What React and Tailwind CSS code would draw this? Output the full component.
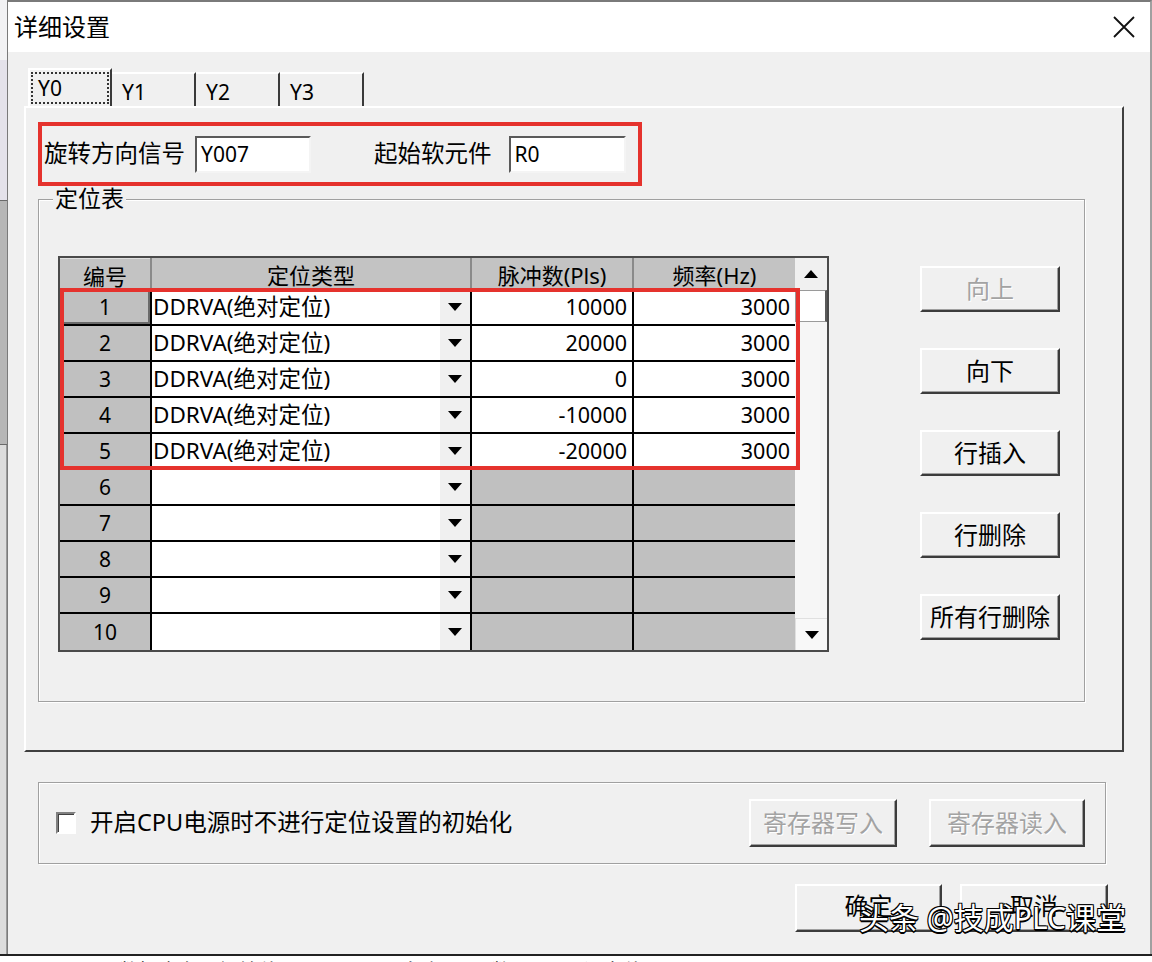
import React from 'react';

const rows = [
  { n: 1, type: 'DDRVA(绝对定位)', p: '10000', f: '3000' },
  { n: 2, type: 'DDRVA(绝对定位)', p: '20000', f: '3000' },
  { n: 3, type: 'DDRVA(绝对定位)', p: '0', f: '3000' },
  { n: 4, type: 'DDRVA(绝对定位)', p: '-10000', f: '3000' },
  { n: 5, type: 'DDRVA(绝对定位)', p: '-20000', f: '3000' },
  { n: 6 },
  { n: 7 },
  { n: 8 },
  { n: 9 },
  { n: 10 },
];

const Tri = ({ up }) => (
  <svg width="14" height="8" viewBox="0 0 14 8">
    <path d={up ? 'M7 0L14 8H0z' : 'M0 0H14L7 8z'} fill="#000" />
  </svg>
);

const Btn = ({ children, disabled, className = '' }) => (
  <div
    className={`flex items-center justify-center bg-[#f0f0f0] border-2 border-t-white border-l-white border-r-[#3c3c3c] border-b-[#3c3c3c] shadow-[inset_-1px_-1px_0_#a0a0a0] text-[24px] leading-none ${
      disabled ? 'text-[#a3a3a3] [text-shadow:1px_1px_0_#ffffff]' : 'text-black'
    } ${className}`}
  >
    {children}
  </div>
);

const Input = ({ value, className = '' }) => (
  <div
    className={`h-[37px] bg-white border-2 border-t-[#5a5a5a] border-l-[#5a5a5a] border-r-[#f4f4f4] border-b-[#f4f4f4] flex items-center pl-[4px] text-[21px] leading-none ${className}`}
  >
    {value}
  </div>
);

const Row = ({ r, last }) => {
  const filled = !!r.p;
  return (
    <div className={`flex h-[36px] ${last ? '' : 'border-b-2 border-black'}`}>
      <div
        className={`w-[90px] bg-[#c0c0c0] flex items-center justify-center text-[21px] leading-none ${
          r.n === 1 ? 'border-2 border-t-[#e6e6e6] border-l-[#e6e6e6] border-r-[#6a6a6a] border-b-[#6a6a6a]' : ''
        }`}
      >
        {r.n}
      </div>
      <div className="w-[320px] border-l-2 border-black bg-white flex">
        <div className="flex-1 flex items-center pl-[1px] text-[22.5px] leading-none whitespace-nowrap">
          {r.type || ''}
        </div>
        <div className="w-[30px] bg-[#f0f0f0] flex items-center justify-center">
          <Tri />
        </div>
      </div>
      <div
        className={`w-[162px] border-l-2 border-black flex items-center justify-end pr-[5px] text-[21.5px] leading-none ${
          filled ? 'bg-white' : 'bg-[#c0c0c0]'
        }`}
      >
        {r.p || ''}
      </div>
      <div
        className={`flex-1 border-l-2 border-black flex items-center justify-end pr-[5px] text-[21.5px] leading-none ${
          filled ? 'bg-white' : 'bg-[#c0c0c0]'
        }`}
      >
        {r.f || ''}
      </div>
    </div>
  );
};

const PosTable = () => (
  <div className="relative w-[771px] border-2 border-[#4a4a4a] flex">
    <div className="w-[735px] flex flex-col">
      <div className="flex h-[32px] border-b-2 border-black bg-[#c3c3c3] text-[22px] leading-none">
        <div className="w-[90px] flex items-center justify-center pt-[4px] border-t border-t-[#e0e0e0]">编号</div>
        <div className="w-[320px] border-l-2 border-[#8a8a8a] flex items-center justify-center pt-[4px]">定位类型</div>
        <div className="w-[162px] border-l-2 border-[#8a8a8a] flex items-center justify-center pt-[4px]">脉冲数(Pls)</div>
        <div className="flex-1 border-l-2 border-[#8a8a8a] flex items-center justify-center pt-[4px]">频率(Hz)</div>
      </div>
      {rows.map((r, i) => (
        <Row key={r.n} r={r} last={i === rows.length - 1} />
      ))}
    </div>
    <div className="w-[32px] flex flex-col bg-[#f6f6f6]">
      <div className="h-[32px] bg-[#f0f0f0] flex items-center justify-center">
        <Tri up />
      </div>
      <div className="h-[32px] bg-white border border-[#9a9a9a] border-r-2 border-r-[#5a5a5a]" />
      <div className="flex-1" />
      <div className="h-[32px] bg-[#f8f8f8] border-t border-l border-[#e0e0e0] flex items-center justify-center">
        <Tri />
      </div>
    </div>
    <div className="absolute left-[0px] top-[30px] w-[740px] h-[182px] border-4 border-[#e5322d] pointer-events-none" />
  </div>
);

const LeftStrip = () => (
  <div className="w-[7px] flex flex-col overflow-hidden">
    <div className="h-[60px] bg-[#f2f2f4]" />
    <div className="h-[140px] bg-[#e4e2ea]" />
    <div className="h-[245px] bg-[#b6b6b6] border-y border-[#6a6a6a]" />
    <div className="flex-1 bg-[#dcdcdc] border-r border-[#9a9a9a]" />
  </div>
);

export default function App() {
  return (
    <div className="w-[1152px] h-[962px] overflow-hidden bg-white text-black font-['Noto_Sans','Noto_Sans_CJK_SC',sans-serif] flex flex-col">
      <div className="flex h-[954px]">
        <LeftStrip />
        <div className="flex-1 flex flex-col border-l border-t-2 border-r-2 border-[#7a7a7a] border-r-[#a0a0a0]">
          {/* title bar */}
          <div className="h-[50px] bg-white flex items-center justify-between pl-[6px] pr-[14px]">
            <span className="text-[24px] leading-none">详细设置</span>
            <svg width="24" height="24" viewBox="0 0 24 24">
              <path d="M2 2L22 22M22 2L2 22" stroke="#111" strokeWidth="1.8" />
            </svg>
          </div>

          {/* body */}
          <div className="flex-1 bg-[#f0f0f0] flex flex-col pt-[16px]">
            {/* tabs */}
            <div className="flex items-end h-[38px] pl-[20px] text-[21px] leading-none">
              <div className="w-[84px] h-[38px] border-t-2 border-l-2 border-t-white border-l-white border-r-2 border-r-[#3a3a3a]">
                <div className="mx-[1px] mt-[2px] h-[32px] border-2 border-dotted border-[#333] flex items-center pl-[5px]">
                  Y0
                </div>
              </div>
              {['Y1', 'Y2', 'Y3'].map((t) => (
                <div
                  key={t}
                  className="w-[84px] h-[34px] border-t-2 border-t-white border-r-2 border-r-[#3a3a3a] flex items-center pl-[10px] pt-[4px]"
                >
                  {t}
                </div>
              ))}
            </div>

            {/* tab panel */}
            <div className="ml-[16px] w-[1100px] h-[646px] border-2 border-t-white border-l-white border-r-[#404040] border-b-[#404040] flex flex-col">
              <div className="ml-[12px] mt-[14px] w-[604px] h-[64px] border-4 border-[#e5322d] flex items-center pl-[2px] text-[23.5px] leading-none">
                <span>旋转方向信号</span>
                <Input value="Y007" className="ml-[10px] w-[116px]" />
                <span className="ml-[63px]">起始软元件</span>
                <Input value="R0" className="ml-[17px] w-[117px]" />
              </div>

              <div className="relative ml-[12px] mt-[13px] w-[1047px] h-[503px] border border-[#a0a0a0] shadow-[inset_1px_1px_0_#ffffff,1px_1px_0_#ffffff] flex items-start">
                <span className="absolute -top-[13px] left-[14px] px-[2px] bg-[#f0f0f0] text-[23px] leading-none">
                  定位表
                </span>
                <div className="ml-[19px] mt-[56px]">
                  <PosTable />
                </div>
                <div className="ml-[91px] mt-[66px] flex flex-col gap-[36px]">
                  <Btn disabled className="w-[140px] h-[46px]">向上</Btn>
                  <Btn className="w-[140px] h-[46px]">向下</Btn>
                  <Btn className="w-[140px] h-[46px]">行插入</Btn>
                  <Btn className="w-[140px] h-[46px]">行删除</Btn>
                  <Btn className="w-[140px] h-[46px]">所有行删除</Btn>
                </div>
              </div>
            </div>

            {/* bottom group */}
            <div className="ml-[30px] mt-[30px] w-[1068px] h-[82px] border border-[#a0a0a0] shadow-[inset_1px_1px_0_#ffffff,1px_1px_0_#ffffff] flex items-center">
              <div className="ml-[17px] w-[20px] h-[22px] bg-white border-2 border-t-[#808080] border-l-[#808080] border-r-white border-b-white shadow-[inset_1px_1px_0_#404040]" />
              <span className="ml-[14px] text-[23.5px] leading-none">开启CPU电源时不进行定位设置的初始化</span>
              <Btn disabled className="ml-auto w-[148px] h-[48px]">寄存器写入</Btn>
              <Btn disabled className="ml-[32px] mr-[20px] w-[156px] h-[48px]">寄存器读入</Btn>
            </div>

            {/* ok / cancel */}
            <div className="relative mt-[20px] flex justify-end gap-[18px] pr-[42px]">
              <Btn className="w-[147px] h-[48px] items-start pt-[8px]">确定</Btn>
              <Btn className="w-[148px] h-[48px] items-start pt-[8px]">取消</Btn>
              <span className="absolute right-[24px] top-[19px] text-[30px] leading-none text-white whitespace-nowrap [text-shadow:1px_1px_0_#000,-1px_-1px_0_#000,1px_-1px_0_#000,-1px_1px_0_#000,0_2px_0_#000]">
                头条 @技成PLC课堂
              </span>
            </div>
          </div>
        </div>
      </div>
      <div className="h-[8px] border-t-2 border-[#222] bg-white overflow-hidden pl-[10px] text-[20px] leading-[1.6] text-black whitespace-nowrap">
        ID0000 &nbsp;&nbsp;&nbsp;&nbsp;&nbsp;&nbsp; 数据寄存器初始值 &nbsp;&nbsp;&nbsp;&nbsp;&nbsp;&nbsp;&nbsp; | &nbsp;&nbsp;&nbsp;&nbsp;&nbsp;&nbsp;&nbsp;&nbsp;&nbsp;&nbsp; 脉冲 &nbsp;&nbsp;&nbsp;&nbsp;&nbsp;&nbsp;&nbsp;&nbsp; 数目 &nbsp;&nbsp;&nbsp;&nbsp;&nbsp;&nbsp;&nbsp;&nbsp; 设定值
      </div>
    </div>
  );
}
